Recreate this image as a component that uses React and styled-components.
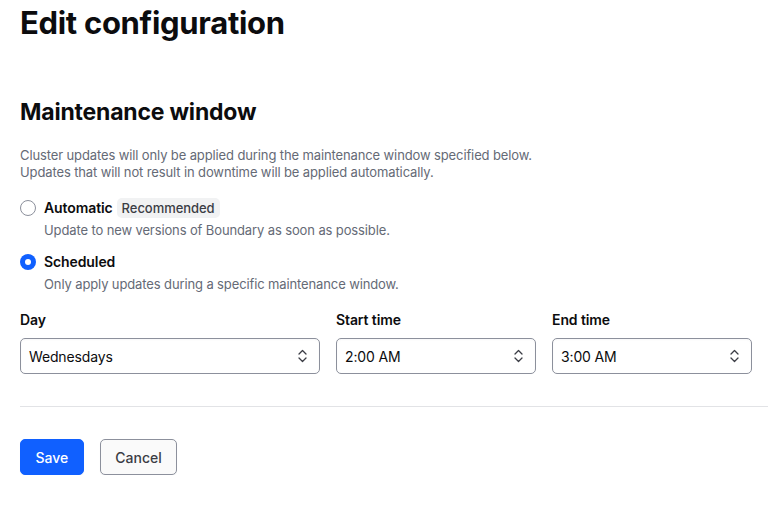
import React from "react";
import styled, { createGlobalStyle } from "styled-components";

const Global = createGlobalStyle`
  html, body { margin: 0; padding: 0; background: #fff; }
  body { font-family: Inter, "Noto Sans", sans-serif; color: #0c0c0e; -webkit-font-smoothing: antialiased; }
  * { box-sizing: border-box; }
`;

const Page = styled.div`
  padding: 4px 0 0 20px;
  display: flex;
  flex-direction: column;
`;

const Title = styled.h1`
  margin: 0;
  font-size: 31px;
  line-height: 38px;
  font-weight: 700;
  letter-spacing: -0.3px;
`;

const SectionTitle = styled.h2`
  margin: 54px 0 0;
  font-size: 23px;
  line-height: 32px;
  font-weight: 700;
  letter-spacing: -0.2px;
`;

const Description = styled.p`
  margin: 19px 0 0;
  font-size: 13px;
  line-height: 17px;
  letter-spacing: -0.12px;
  color: #656a76;
`;

const RadioGroup = styled.div`
  display: flex;
  flex-direction: column;
  gap: 13px;
  margin-top: 17px;
`;

const RadioItem = styled.label`
  display: grid;
  grid-template-columns: 16px 1fr;
  column-gap: 8px;
  row-gap: 3px;
  align-items: center;
`;

const RadioCircle = styled.span`
  width: 16px;
  height: 16px;
  border-radius: 50%;
  border: ${(p) => (p.$checked ? "none" : "1px solid #8c909c")};
  background: ${(p) => (p.$checked ? "#1060ff" : "#fff")};
  display: flex;
  align-items: center;
  justify-content: center;
  &::after {
    content: "";
    display: ${(p) => (p.$checked ? "block" : "none")};
    width: 6px;
    height: 6px;
    border-radius: 50%;
    background: #fff;
  }
`;

const RadioLabel = styled.span`
  font-size: 14px;
  line-height: 20px;
  font-weight: 600;
  letter-spacing: -0.1px;
  color: #0c0c0e;
  display: flex;
  align-items: center;
  gap: 4px;
`;

const Badge = styled.span`
  font-size: 13px;
  line-height: 18px;
  font-weight: 500;
  letter-spacing: -0.05px;
  color: #3b3d45;
  background: #f1f2f3;
  border-radius: 5px;
  padding: 1px 5px;
`;

const Helper = styled.span`
  grid-column: 2;
  font-size: 13px;
  line-height: 18px;
  letter-spacing: -0.12px;
  color: #656a76;
`;

const Fields = styled.div`
  display: flex;
  gap: 16px;
  margin-top: 17px;
`;

const Field = styled.div`
  display: flex;
  flex-direction: column;
  gap: 8px;
  width: ${(p) => p.$width}px;
`;

const FieldLabel = styled.span`
  font-size: 14px;
  line-height: 20px;
  font-weight: 600;
  letter-spacing: -0.1px;
  color: #0c0c0e;
`;

const SelectBox = styled.div`
  height: 36px;
  border: 1px solid #8c909c;
  border-radius: 5px;
  box-shadow: inset 0 1px 2px rgba(97, 104, 117, 0.05);
  display: flex;
  align-items: center;
  justify-content: space-between;
  padding: 0 11px 0 8px;
  font-size: 14px;
  letter-spacing: -0.15px;
  color: #0c0c0e;
`;

const Divider = styled.hr`
  border: none;
  border-top: 1px solid #e2e3e6;
  margin: 32px 0 0;
  width: 100%;
`;

const Actions = styled.div`
  display: flex;
  gap: 16px;
  margin-top: 32px;
`;

const Button = styled.button`
  height: 36px;
  padding: 0 ${(p) => (p.$primary ? "14.5px" : "14.5px")};
  border-radius: 5px;
  font-family: inherit;
  font-size: 14px;
  font-weight: 500;
  border: 1px solid ${(p) => (p.$primary ? "#1060ff" : "#8c909c")};
  background: ${(p) => (p.$primary ? "#1060ff" : "#fafafa")};
  color: ${(p) => (p.$primary ? "#fff" : "#3b3d45")};
  box-shadow: 0 1px 1px rgba(5, 20, 45, 0.05);
`;

const Chevrons = () => (
  <svg width="11" height="14" viewBox="0 0 11 14" fill="none" stroke="#3b3d45" strokeWidth="1.3" strokeLinecap="round" strokeLinejoin="round">
    <path d="M2 5l3.5-3.5L9 5" />
    <path d="M2 9l3.5 3.5L9 9" />
  </svg>
);

const Select = ({ label, value, width }) => (
  <Field $width={width}>
    <FieldLabel>{label}</FieldLabel>
    <SelectBox>
      <span>{value}</span>
      <Chevrons />
    </SelectBox>
  </Field>
);

export default function App() {
  return (
    <>
      <Global />
      <Page>
        <Title>Edit configuration</Title>
        <SectionTitle>Maintenance window</SectionTitle>
        <Description>
          Cluster updates will only be applied during the maintenance window specified below.
          <br />
          Updates that will not result in downtime will be applied automatically.
        </Description>
        <RadioGroup>
          <RadioItem>
            <RadioCircle />
            <RadioLabel>
              Automatic <Badge>Recommended</Badge>
            </RadioLabel>
            <Helper>Update to new versions of Boundary as soon as possible.</Helper>
          </RadioItem>
          <RadioItem>
            <RadioCircle $checked />
            <RadioLabel>Scheduled</RadioLabel>
            <Helper>Only apply updates during a specific maintenance window.</Helper>
          </RadioItem>
        </RadioGroup>
        <Fields>
          <Select label="Day" value="Wednesdays" width={300} />
          <Select label="Start time" value="2:00 AM" width={200} />
          <Select label="End time" value="3:00 AM" width={200} />
        </Fields>
        <Divider />
        <Actions>
          <Button $primary>Save</Button>
          <Button>Cancel</Button>
        </Actions>
      </Page>
    </>
  );
}
